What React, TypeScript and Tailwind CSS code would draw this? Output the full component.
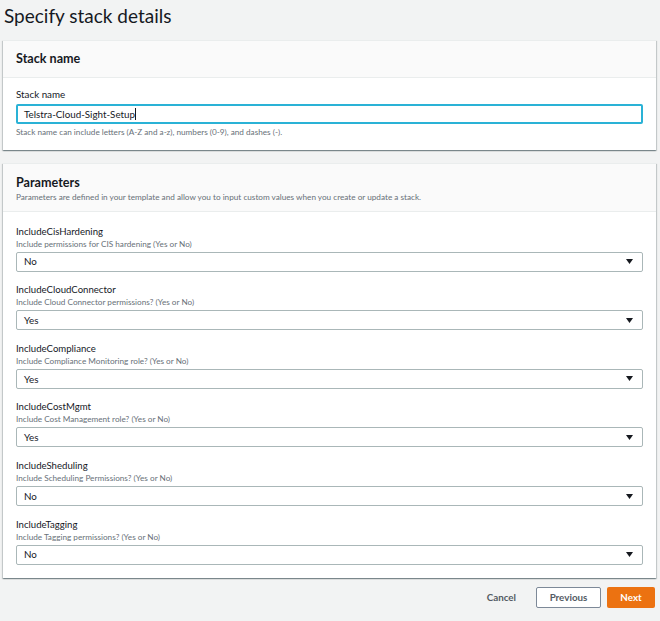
import React from "react";

const params = [
  { name: "IncludeCisHardening", desc: "Include permissions for CIS hardening (Yes or No)", value: "No" },
  { name: "IncludeCloudConnector", desc: "Include Cloud Connector permissions? (Yes or No)", value: "Yes" },
  { name: "IncludeCompliance", desc: "Include Compliance Monitoring role? (Yes or No)", value: "Yes" },
  { name: "IncludeCostMgmt", desc: "Include Cost Management role? (Yes or No)", value: "Yes" },
  { name: "IncludeSheduling", desc: "Include Scheduling Permissions? (Yes or No)", value: "No" },
  { name: "IncludeTagging", desc: "Include Tagging permissions? (Yes or No)", value: "No" },
];

function Select({ value }: { value: string }) {
  return (
    <div className="h-[20px] border border-[#aab7b8] rounded-[2px] bg-white flex items-center justify-between pl-[7px] pr-[9px]">
      <span className="text-[9.8px] text-[#16191f]">{value}</span>
      <svg width="7" height="5" viewBox="0 0 7 5">
        <polygon points="0,0 7,0 3.5,5" fill="#16191f" />
      </svg>
    </div>
  );
}

export default function App() {
  return (
    <div
      className="w-[660px] h-[621px] bg-[#f2f3f3] overflow-hidden text-[#16191f]"
      style={{ fontFamily: "Lato, 'Open Sans', sans-serif" }}
    >
      <div className="h-[40px] pl-[4px] pt-[3px]">
        <h1 className="text-[19px] leading-[26px] font-normal">Specify stack details</h1>
      </div>

      <div className="ml-[3px] mr-[4px]">
        {/* Stack name card */}
        <div className="bg-white border-t border-[#eaeded] shadow-[0_1px_1px_0_rgba(0,28,36,0.3),1px_1px_1px_0_rgba(0,28,36,0.15),-1px_1px_1px_0_rgba(0,28,36,0.15)]">
          <div className="h-[37px] bg-[#fafafa] border-b border-[#eaeded] flex items-center px-[13px]">
            <h2 className="text-[12.6px] font-bold leading-[16px]">Stack name</h2>
          </div>
          <div className="px-[13px] pt-[8px] pb-[12px]">
            <div className="text-[9.8px] leading-[16px]">Stack name</div>
            <div className="mt-[2px] h-[20px] border-2 border-[#2ab2d6] rounded-[2px] flex items-center pl-[6px]">
              <span className="text-[9.8px] text-[#16191f]">Telstra-Cloud-Sight-Setup</span>
              <span className="w-[1px] h-[12px] bg-[#16191f]" />
            </div>
            <div className="mt-[2px] text-[8.2px] leading-[12px] text-[#687078]">
              Stack name can include letters (A-Z and a-z), numbers (0-9), and dashes (-).
            </div>
          </div>
        </div>

        {/* Parameters card */}
        <div className="mt-[13px] bg-white border-t border-[#eaeded] shadow-[0_1px_1px_0_rgba(0,28,36,0.3),1px_1px_1px_0_rgba(0,28,36,0.15),-1px_1px_1px_0_rgba(0,28,36,0.15)]">
          <div className="bg-[#fafafa] border-b border-[#eaeded] px-[13px] pt-[11px] pb-[8px]">
            <h2 className="text-[12.6px] font-bold leading-[16px]">Parameters</h2>
            <div className="text-[8.2px] leading-[12px] text-[#687078]">
              Parameters are defined in your template and allow you to input custom values when you create or update a stack.
            </div>
          </div>
          <div className="px-[13px] pt-[13.7px] pb-[13px] flex flex-col gap-[12.6px]">
            {params.map((p) => (
              <div key={p.name}>
                <div className="text-[9.6px] leading-[12px]">{p.name}</div>
                <div className="text-[8.2px] leading-[12px] text-[#687078]">{p.desc}</div>
                <div className="mt-[2px]">
                  <Select value={p.value} />
                </div>
              </div>
            ))}
          </div>
        </div>

        {/* Footer */}
        <div className="mt-[9px] flex justify-end items-center gap-[6px] mr-[1px]">
          <button className="h-[21px] px-[14px] text-[9.8px] font-bold text-[#545b64]">Cancel</button>
          <button className="h-[21px] w-[65px] border border-[#7d8998] rounded-[2px] bg-white text-[9.8px] font-bold text-[#545b64]">
            Previous
          </button>
          <button className="h-[21px] w-[48px] rounded-[2px] bg-[#ec7211] text-[9.8px] font-bold text-white">
            Next
          </button>
        </div>
      </div>
    </div>
  );
}
